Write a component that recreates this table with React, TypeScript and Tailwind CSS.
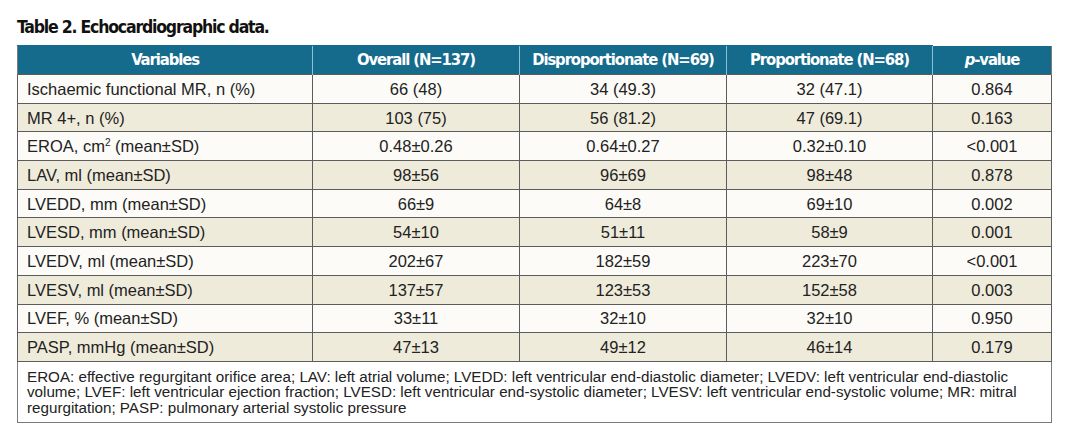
import React from "react";

const rows: [string, string, string, string, string][] = [
  ["Ischaemic functional MR, n (%)", "66 (48)", "34 (49.3)", "32 (47.1)", "0.864"],
  ["MR 4+, n (%)", "103 (75)", "56 (81.2)", "47 (69.1)", "0.163"],
  ["EROA, cm² (mean±SD)", "0.48±0.26", "0.64±0.27", "0.32±0.10", "<0.001"],
  ["LAV, ml (mean±SD)", "98±56", "96±69", "98±48", "0.878"],
  ["LVEDD, mm (mean±SD)", "66±9", "64±8", "69±10", "0.002"],
  ["LVESD, mm (mean±SD)", "54±10", "51±11", "58±9", "0.001"],
  ["LVEDV, ml (mean±SD)", "202±67", "182±59", "223±70", "<0.001"],
  ["LVESV, ml (mean±SD)", "137±57", "123±53", "152±58", "0.003"],
  ["LVEF, % (mean±SD)", "33±11", "32±10", "32±10", "0.950"],
  ["PASP, mmHg (mean±SD)", "47±13", "49±12", "46±14", "0.179"],
];

const condensed = { fontFamily: '"DejaVu Sans Condensed", "Liberation Sans Narrow", "Liberation Sans", sans-serif', fontStretch: "condensed" as const };

export default function App() {
  return (
    <div className="w-[1072px] h-[446px] bg-white pt-[16px] pl-[17px]" style={{ fontFamily: '"Liberation Sans", Arial, sans-serif' }}>
      <div className="text-[17.5px] font-bold leading-[22px] tracking-[-1.2px] text-[#111] mb-[7px]" style={condensed}>
        Table 2. Echocardiographic data.
      </div>
      <table className="border-collapse table-fixed w-[1034px] text-[#222]">
        <colgroup>
          <col className="w-[295px]" />
          <col className="w-[207px]" />
          <col className="w-[207px]" />
          <col className="w-[206px]" />
          <col className="w-[119px]" />
        </colgroup>
        <thead>
          <tr className="bg-[#156b8c] text-white h-[29px]">
            {["Variables", "Overall (N=137)", "Disproportionate (N=69)", "Proportionate (N=68)"].map((h, i) => (
              <th
                key={h}
                className={`text-[16.5px] font-bold leading-[20px] tracking-[-1.1px] text-center p-0 border-t border-t-[#156b8c] ${i === 0 ? "border-l border-l-[#7a7a7a]" : "border-l border-l-[#8cc0d6]"}`}
                style={condensed}
              >
                {h}
              </th>
            ))}
            <th className="text-[16.5px] font-bold leading-[20px] tracking-[-1.1px] text-center p-0 border-l border-l-[#8cc0d6] border-r border-r-[#7a7a7a]" style={condensed}>
              <span className="italic">p</span>-value
            </th>
          </tr>
        </thead>
        <tbody>
          {rows.map((r, idx) => (
            <tr key={r[0]} className={`h-[28.7px] ${idx % 2 === 0 ? "bg-[#fcfbf7]" : "bg-[#efebdb]"}`}>
              {r.map((c, i) => (
                <td
                  key={i}
                  className={`border border-[#5c5c5c] p-0 text-[16.5px] leading-[18px] ${i === 0 ? "text-left pl-[9px]" : "text-center"}`}
                >
                  {i === 0 && c.includes("cm²") ? (
                    <>EROA, cm<sup className="text-[10px] -top-[6px]">2</sup> (mean±SD)</>
                  ) : (
                    c
                  )}
                </td>
              ))}
            </tr>
          ))}
          <tr className="bg-white">
            <td colSpan={5} className="border border-[#7a7a7a] pl-[9px] pr-[10px] pt-[7px] pb-[7px] text-[15.2px] leading-[15.5px] text-[#222]">
              EROA: effective regurgitant orifice area; LAV: left atrial volume; LVEDD: left ventricular end-diastolic diameter; LVEDV: left ventricular end-diastolic volume; LVEF: left ventricular ejection fraction; LVESD: left ventricular end-systolic diameter; LVESV: left ventricular end-systolic volume; MR: mitral regurgitation; PASP: pulmonary arterial systolic pressure
            </td>
          </tr>
        </tbody>
      </table>
    </div>
  );
}
